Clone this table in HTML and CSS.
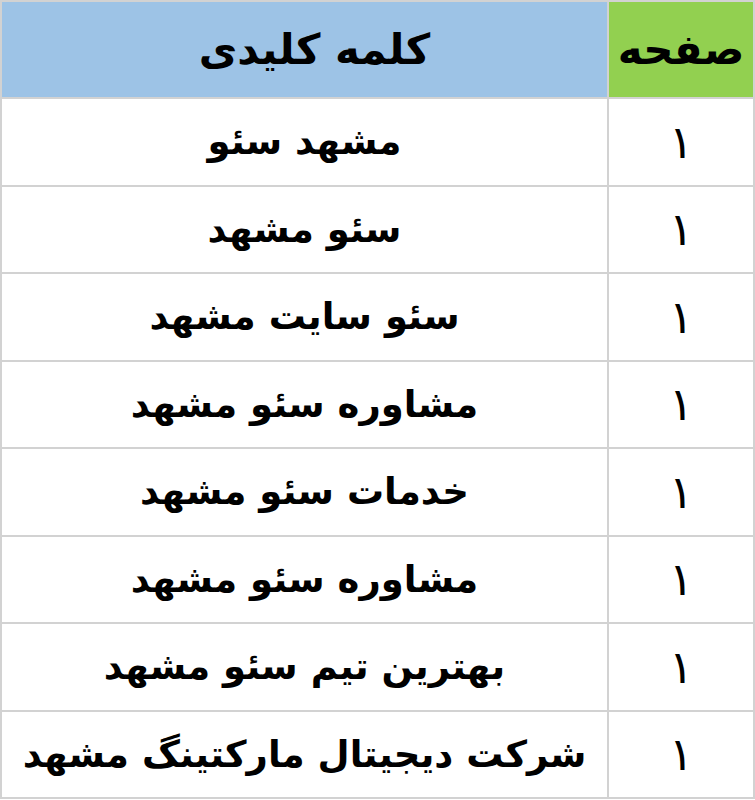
FILE: index.html
```html
<!DOCTYPE html>
<html lang="fa" dir="rtl">
<head>
<meta charset="utf-8">
<link rel="stylesheet" href="styles.css">
</head>
<body>
<table class="kw-table">
  <thead>
    <tr>
      <th class="col-page">صفحه</th>
      <th class="col-kw">کلمه کلیدی</th>
    </tr>
  </thead>
  <tbody>
    <tr><td class="num">۱</td><td>مشهد سئو</td></tr>
    <tr><td class="num">۱</td><td>سئو مشهد</td></tr>
    <tr><td class="num">۱</td><td>سئو سایت مشهد</td></tr>
    <tr><td class="num">۱</td><td>مشاوره سئو مشهد</td></tr>
    <tr><td class="num">۱</td><td>خدمات سئو مشهد</td></tr>
    <tr><td class="num">۱</td><td>مشاوره سئو مشهد</td></tr>
    <tr><td class="num">۱</td><td>بهترین تیم سئو مشهد</td></tr>
    <tr><td class="num">۱</td><td>شرکت دیجیتال مارکتینگ مشهد</td></tr>
  </tbody>
</table>
</body>
</html>
```
FILE: styles.css
```css
html, body {
  margin: 0;
  padding: 0;
  background: #ffffff;
}
.kw-table {
  border-collapse: collapse;
  width: 755px;
  table-layout: fixed;
  font-family: "DejaVu Sans", sans-serif;
  font-weight: bold;
  color: #000;
}
.kw-table th,
.kw-table td {
  border: 2px solid #d2d2d2;
  text-align: center;
  vertical-align: middle;
  padding: 0;
  height: 85.5px;
  font-size: 37px;
  line-height: 1;
}
.kw-table th {
  height: 95px;
  font-size: 42px;
}
.kw-table th.col-kw {
  padding-left: 20px;
}
.col-page {
  width: 144px;
  background: #92d050;
}
.col-kw {
  background: #9dc3e6;
}
.kw-table td.num {
  font-size: 46px;
  font-weight: normal;
}
```
